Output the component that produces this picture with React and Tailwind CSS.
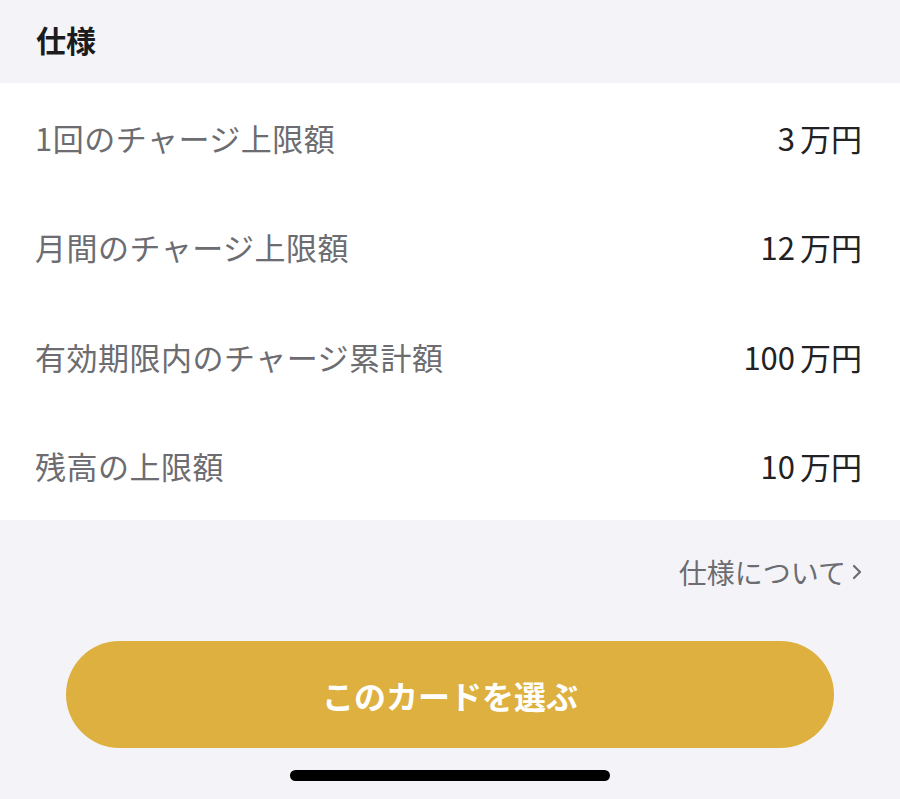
const SPECS = [
  { label: '1回のチャージ上限額', num: '3', unit: '万円' },
  { label: '月間のチャージ上限額', num: '12', unit: '万円' },
  { label: '有効期限内のチャージ累計額', num: '100', unit: '万円' },
  { label: '残高の上限額', num: '10', unit: '万円' },
]

export default function App() {
  return (
    <div
      className="w-[900px] h-[799px] bg-[#f4f4f8] flex flex-col overflow-hidden"
      style={{ fontFamily: '"Noto Sans CJK JP", "Noto Sans", sans-serif' }}
    >
      <div className="h-[83px] flex items-center px-[36px]">
        <h2 className="text-[30px] font-bold text-[#1c1c1e] leading-none -mt-[6px]">仕様</h2>
      </div>

      <div className="bg-white flex flex-col h-[437px]">
        {SPECS.map((s) => (
          <div key={s.label} className="flex-1 flex items-center justify-between pl-[35px] pr-[38px]">
            <span className="text-[31px] text-[#6c6c71] leading-none tracking-[0.5px]">{s.label}</span>
            <span className="text-[31px] text-[#222224] leading-none">
              {s.num}
              <span className="ml-[5px]">{s.unit}</span>
            </span>
          </div>
        ))}
      </div>

      <div className="h-[104px] flex items-center justify-end pr-[38px]">
        <a className="text-[28px] text-[#6c6c71] leading-none flex items-center gap-[6px] -mt-[1px]">
          仕様について
          <svg width="10" height="16" viewBox="0 0 10 16" fill="none">
            <path d="M2 2l6 6-6 6" stroke="#6c6c71" strokeWidth="2.2" strokeLinecap="round" strokeLinejoin="round" />
          </svg>
        </a>
      </div>

      <div className="px-[66px] pt-[17px]">
        <button className="w-full h-[107px] rounded-full bg-[#ddb03f] text-white text-[32px] font-bold leading-none">
          このカードを選ぶ
        </button>
      </div>

      <div className="flex justify-center pt-[22px]">
        <div className="w-[320px] h-[11px] rounded-full bg-black" />
      </div>
    </div>
  )
}
